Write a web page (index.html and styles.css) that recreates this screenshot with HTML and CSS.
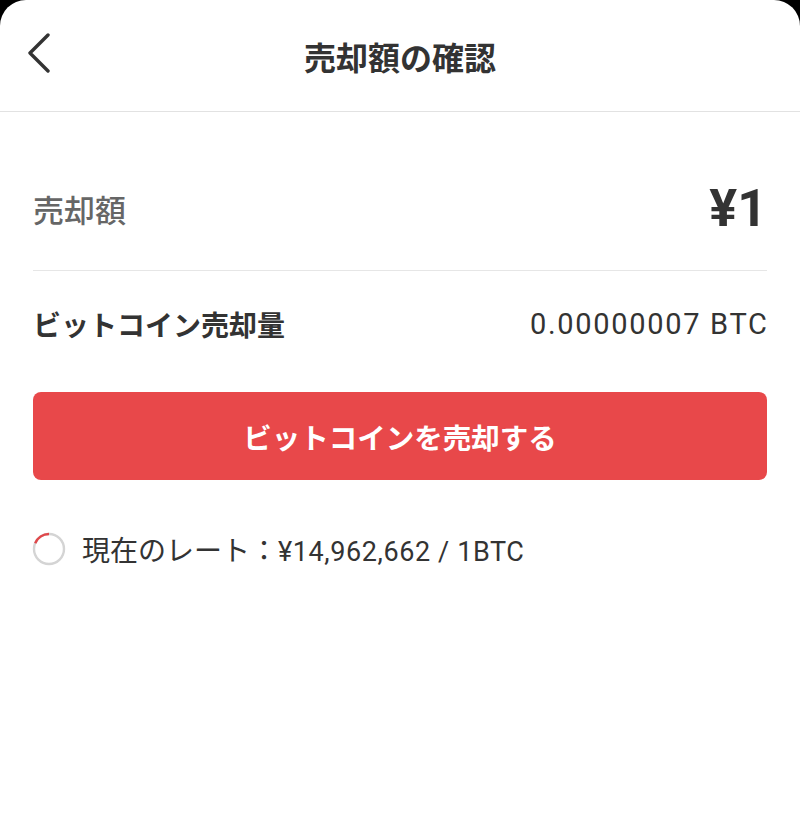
FILE: index.html
```
<!DOCTYPE html>
<html lang="ja">
<head>
    <meta charset="UTF-8">
    <meta name="viewport" content="width=device-width, initial-scale=1.0">
    <title>売却額の確認</title>
    <link rel="stylesheet" href="styles.css">
</head>
<body>

<div class="screen">
    <header class="header">
        <button class="back" aria-label="戻る">
            <svg width="24" height="42" viewBox="0 0 24 42">
                <polyline points="20,3 2,21 20,39" fill="none" stroke="#333" stroke-width="3.4" stroke-linecap="round" stroke-linejoin="round"/>
            </svg>
        </button>
        <h1>売却額の確認</h1>
    </header>

    <main class="content">
        <div class="row total">
            <span class="label">売却額</span>
            <span class="amount">¥1</span>
        </div>

        <div class="row volume">
            <span class="label">ビットコイン売却量</span>
            <span class="value">0.00000007 BTC</span>
        </div>

        <button class="sell">ビットコインを売却する</button>

        <div class="rate">
            <svg class="spinner" width="34" height="34" viewBox="0 0 34 34">
                <circle cx="17" cy="17" r="15" fill="none" stroke="#d4d4d4" stroke-width="2.4"/>
                <path d="M3.2 11.2 A15 15 0 0 1 17 2" fill="none" stroke="#e0484b" stroke-width="2.4"/>
            </svg>
            <span>現在のレート：<span class="num">¥14,962,662 / 1BTC</span></span>
        </div>
    </main>
</div>

</body>
</html>
```

FILE: styles.css
```
body {
    margin: 0;
    background-color: #000;
    font-family: Roboto, "Noto Sans CJK JP", sans-serif;
    color: #333;
}
.screen {
    background-color: #fff;
    min-height: 820px;
    border-radius: 26px 26px 0 0;
    overflow: hidden;
}
.header {
    position: relative;
    height: 111px;
    border-bottom: 1px solid #e2e2e2;
    display: flex;
    align-items: center;
    justify-content: center;
}
.header h1 {
    margin: 0;
    font-size: 32px;
    font-weight: 700;
    color: #333;
}
.back {
    position: absolute;
    left: 28px;
    top: 32px;
    padding: 0;
    border: none;
    background: none;
    line-height: 0;
}
.content {
    padding: 0 33px;
}
.row {
    display: flex;
    justify-content: space-between;
    align-items: center;
}
.total {
    height: 50px;
    padding: 71px 0 37px;
    border-bottom: 1px solid #e6e6e6;
}
.total .label {
    font-size: 31px;
    font-weight: 500;
    color: #666;
}
.total .amount {
    font-size: 52px;
    font-weight: 700;
    color: #333;
}
.volume {
    height: 30px;
    padding-top: 38px;
}
.volume .label {
    font-size: 28px;
    font-weight: 700;
}
.volume .value {
    font-size: 29px;
    letter-spacing: 1.7px;
    margin-right: -1.7px;
    color: #333;
}
.sell {
    display: block;
    width: 100%;
    height: 88px;
    margin-top: 53px;
    border: none;
    border-radius: 8px;
    background-color: #e8484a;
    color: #fff;
    font-family: inherit;
    font-size: 28.5px;
    font-weight: 700;
}
.rate {
    display: flex;
    align-items: center;
    gap: 16px;
    margin-top: 49px;
    font-size: 28px;
    color: #333;
}
.rate .num {
    font-size: 27px;
    letter-spacing: 0.6px;
}
.spinner {
    margin-left: -1px;
}
```
